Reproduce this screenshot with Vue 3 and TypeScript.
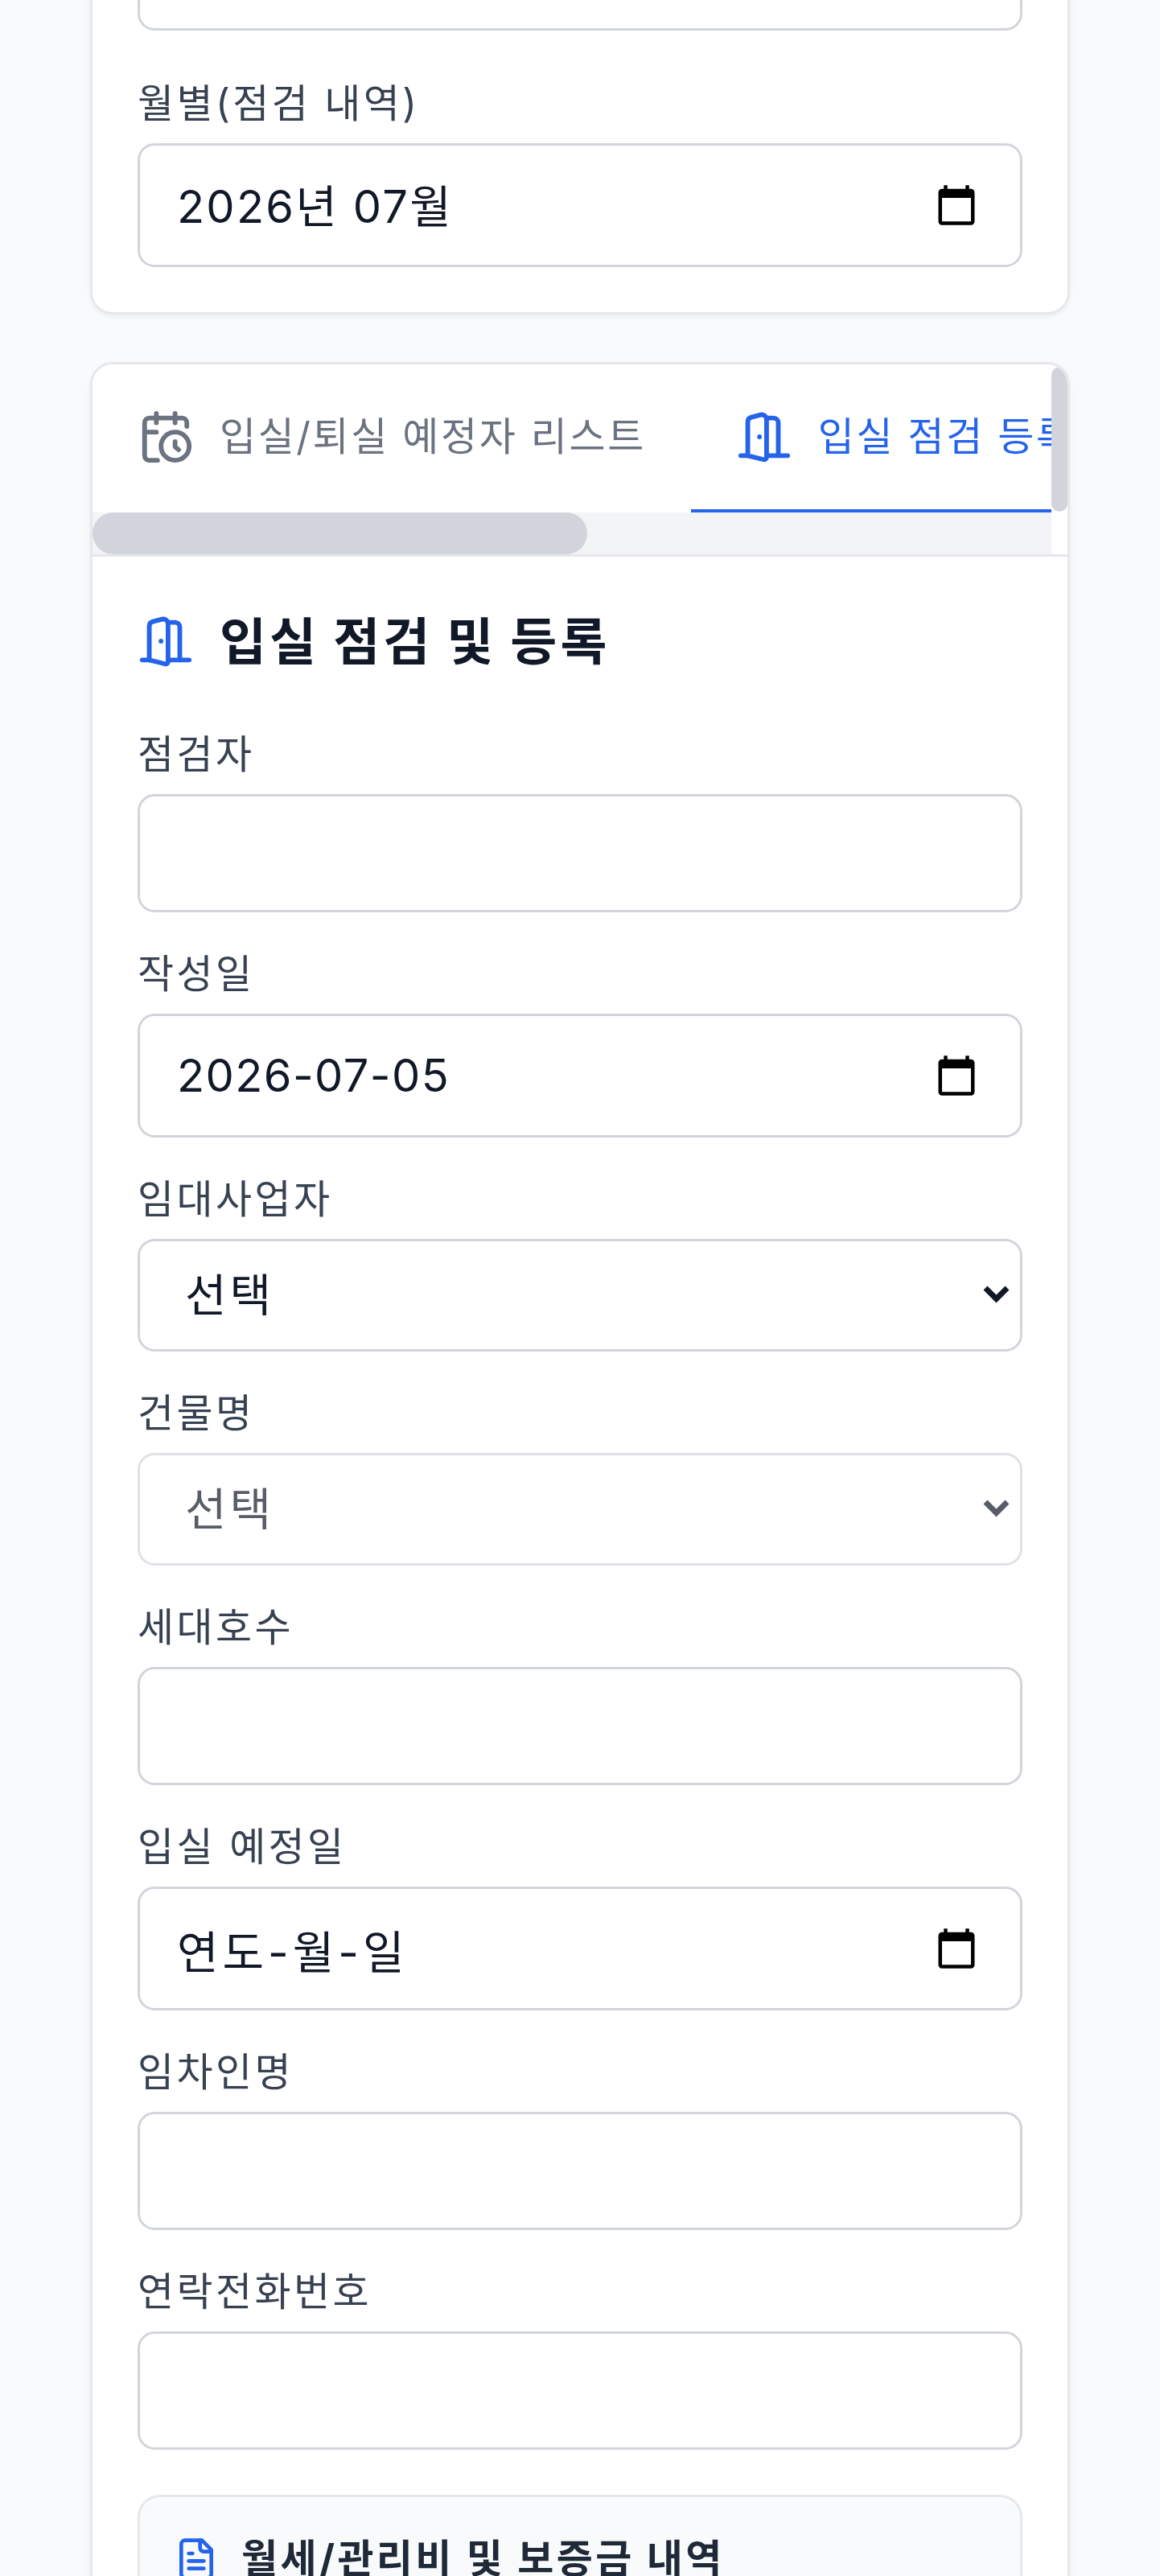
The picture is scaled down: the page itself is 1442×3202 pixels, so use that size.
<script setup lang="ts">
type Field = {
  label: string;
  kind: "text" | "date" | "select";
  value?: string;
  empty?: boolean;
  disabled?: boolean;
};

const fields: Field[] = [
  { label: "점검자", kind: "text" },
  { label: "작성일", kind: "date", value: "2026-07-05" },
  { label: "임대사업자", kind: "select", value: "선택" },
  { label: "건물명", kind: "select", value: "선택", disabled: true },
  { label: "세대호수", kind: "text" },
  { label: "입실 예정일", kind: "date", value: "연도-월-일", empty: true },
  { label: "임차인명", kind: "text" },
  { label: "연락전화번호", kind: "text" },
];

const calendarPath =
  "M20 3h-1V1h-2v2H7V1H5v2H4c-1.1 0-2 .9-2 2v16c0 1.1.9 2 2 2h16c1.1 0 2-.9 2-2V5c0-1.1-.9-2-2-2zm0 18H4V8h16v13z";
</script>

<template>
  <div class="page">
    <section class="card filter-card">
      <input class="input" type="text" />
      <div class="month-field">
        <label class="label">월별(점검 내역)</label>
        <div class="input date month">
          <span>2026년 07월</span>
          <svg class="cal" viewBox="0 0 24 24"><path :d="calendarPath" /></svg>
        </div>
      </div>
    </section>

    <section class="card form-card">
      <div class="tabs">
        <div class="tabs-main">
          <div class="tab-strip">
            <button class="tab">
              <svg class="icon" viewBox="0 0 24 24">
                <path d="M21 7.5V6a2 2 0 0 0-2-2H5a2 2 0 0 0-2 2v14a2 2 0 0 0 2 2h3.5" />
                <path d="M16 2v4" />
                <path d="M8 2v4" />
                <path d="M3 10h5" />
                <path d="M17.5 17.5 16 16.3V14" />
                <circle cx="16" cy="16" r="6" />
              </svg>
              입실/퇴실 예정자 리스트
            </button>
            <button class="tab active">
              <svg class="icon" viewBox="0 0 24 24">
                <path d="M13 4h3a2 2 0 0 1 2 2v14" />
                <path d="M2 20h3" />
                <path d="M13 20h9" />
                <path d="M10 12v.01" />
                <path d="M13 4.562v16.157a1 1 0 0 1-1.242.97L5 20V5.562a2 2 0 0 1 1.515-1.94l4-1A2 2 0 0 1 13 4.561Z" />
              </svg>
              입실 점검 등록
            </button>
          </div>
          <div class="hscroll"><div class="hthumb"></div></div>
        </div>
        <div class="vscroll"><div class="vthumb"></div></div>
      </div>

      <div class="form-body">
        <h2 class="title">
          <svg class="icon blue" viewBox="0 0 24 24">
            <path d="M13 4h3a2 2 0 0 1 2 2v14" />
            <path d="M2 20h3" />
            <path d="M13 20h9" />
            <path d="M10 12v.01" />
            <path d="M13 4.562v16.157a1 1 0 0 1-1.242.97L5 20V5.562a2 2 0 0 1 1.515-1.94l4-1A2 2 0 0 1 13 4.561Z" />
          </svg>
          입실 점검 및 등록
        </h2>

        <div v-for="f in fields" :key="f.label" class="field">
          <label class="label">{{ f.label }}</label>
          <input v-if="f.kind === 'text'" class="input" type="text" />
          <div v-else-if="f.kind === 'date'" class="input date" :class="{ empty: f.empty }">
            <span>{{ f.value }}</span>
            <svg class="cal" viewBox="0 0 24 24"><path :d="calendarPath" /></svg>
          </div>
          <div v-else class="select-wrap" :class="{ disabled: f.disabled }">
            <select class="input select" :disabled="f.disabled">
              <option>{{ f.value }}</option>
            </select>
            <svg class="chevron" viewBox="0 0 33 23"><polyline points="3,3 16.5,16.5 30,3" /></svg>
          </div>
        </div>

        <div class="panel">
          <h3 class="panel-title">
            <svg class="icon small blue" viewBox="0 0 24 24">
              <path d="M15 2H6a2 2 0 0 0-2 2v16a2 2 0 0 0 2 2h12a2 2 0 0 0 2-2V7Z" />
              <path d="M14 2v4a2 2 0 0 0 2 2h4" />
              <path d="M10 9H8" />
              <path d="M16 13H8" />
              <path d="M16 17H8" />
            </svg>
            월세/관리비 및 보증금 내역
          </h3>
        </div>
      </div>
    </section>
  </div>
</template>

<style>
html,
body {
  margin: 0;
  background: #f9fafb;
}
</style>

<style scoped>
.page {
  box-sizing: border-box;
  height: 3202px;
  overflow: hidden;
  padding: 0 112px;
  background: #f9fafb;
  font-family: Inter, "Noto Sans CJK KR", sans-serif;
  color: #111827;
}

.card {
  border: 3px solid #e5e7eb;
  border-radius: 28px;
  background: #fff;
  box-shadow: 0 3px 7px rgba(0, 0, 0, 0.05);
  overflow: hidden;
}

.filter-card {
  margin-top: -112px;
  padding: 0 56px 56px;
}

.month-field {
  margin-top: 56px;
}

.form-card {
  margin-top: 59px;
  height: 3000px;
}

.field {
  margin-bottom: 42px;
}

.label {
  display: block;
  margin-bottom: 14px;
  font-size: 49px;
  line-height: 70px;
  letter-spacing: 3.4px;
  color: #374151;
}

.input {
  display: block;
  box-sizing: border-box;
  width: 100%;
  height: 147px;
  padding: 0 52px 0 46px;
  border: 3px solid #d1d5db;
  border-radius: 21px;
  background: #fff;
  font-family: inherit;
  font-size: 56px;
  color: #111827;
}

.date {
  display: flex;
  align-items: center;
  justify-content: space-between;
  height: 154px;
  letter-spacing: 1.4px;
}

.date.month {
  letter-spacing: 2.2px;
}

.date.month span {
  margin-bottom: 5px;
}

.date.empty {
  letter-spacing: 5px;
}

.cal {
  width: 54px;
  height: 54px;
  flex: none;
  fill: #000;
}

.select-wrap {
  position: relative;
}

.select {
  height: 140px;
  padding-left: 56px;
  letter-spacing: 4px;
  appearance: none;
  opacity: 1;
}

.select-wrap.disabled {
  opacity: 0.7;
}

.chevron {
  position: absolute;
  top: 58px;
  right: 16px;
  width: 33px;
  height: 23px;
  fill: none;
  stroke: #111827;
  stroke-width: 7px;
}

.tabs {
  display: flex;
  border-bottom: 3px solid #e5e7eb;
  background: #fff;
}

.tabs-main {
  flex: 1;
  min-width: 0;
  overflow: hidden;
}

.tab-strip {
  display: flex;
}

.hscroll {
  height: 52px;
  background: #f3f4f6;
}

.hthumb {
  width: 615px;
  height: 100%;
  border-radius: 26px;
  background: #d1d5db;
}

.vscroll {
  flex: none;
  width: 20px;
}

.vthumb {
  height: 180px;
  margin-top: 3px;
  border-radius: 10px;
  background: #d1d5db;
}

.tab {
  display: flex;
  flex: none;
  align-items: center;
  gap: 32px;
  box-sizing: border-box;
  height: 184px;
  padding: 0 56px;
  border: 0;
  border-bottom: 4px solid transparent;
  background: none;
  font-family: inherit;
  font-size: 49px;
  line-height: 70px;
  letter-spacing: 2.6px;
  color: #6b7280;
  white-space: nowrap;
}

.tab.active {
  border-bottom-color: #2563eb;
  color: #2563eb;
}

.icon {
  width: 70px;
  height: 70px;
  flex: none;
  fill: none;
  stroke: currentColor;
  stroke-width: 2;
  stroke-linecap: round;
  stroke-linejoin: round;
}

.icon.small {
  width: 56px;
  height: 56px;
}

.blue {
  color: #2563eb;
}

.form-body {
  padding: 56px;
}

.title {
  display: flex;
  align-items: center;
  gap: 32px;
  margin: 0 0 57px;
  font-size: 63px;
  line-height: 98px;
  font-weight: 700;
  letter-spacing: 4.1px;
  word-spacing: -2px;
  color: #111827;
}

.panel {
  margin-top: 56px;
  padding: 42px;
  border: 3px solid #e5e7eb;
  border-radius: 28px;
  background: #f9fafb;
}

.panel-title {
  display: flex;
  align-items: center;
  gap: 28px;
  margin: 0;
  font-size: 49px;
  line-height: 70px;
  font-weight: 700;
  letter-spacing: 3.4px;
  color: #1f2937;
}
</style>
